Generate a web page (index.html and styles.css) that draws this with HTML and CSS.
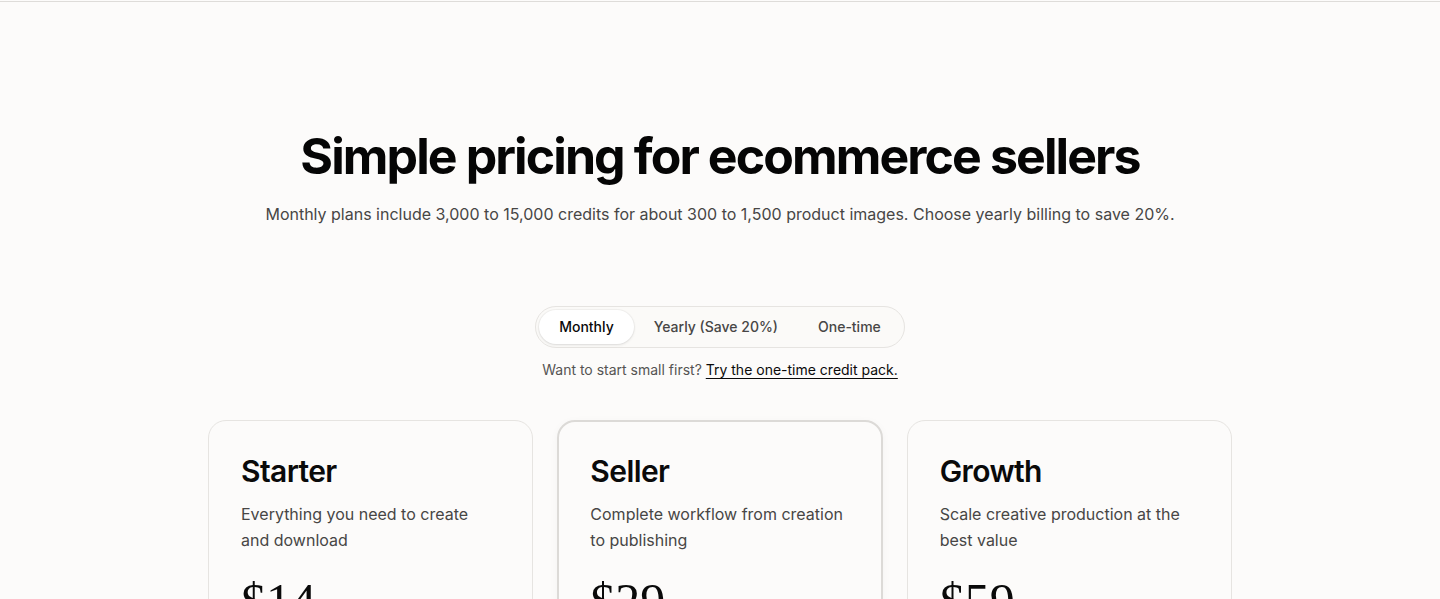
FILE: index.html
```html
<!DOCTYPE html>
<html lang="en">
<head>
  <meta charset="UTF-8">
  <title>Pricing</title>
  <link rel="stylesheet" href="styles.css">
</head>
<body>

  <div class="top-bar"></div>

  <main class="pricing">
    <section class="hero">
      <h1>Simple pricing for ecommerce sellers</h1>
      <p class="lead">Monthly plans include 3,000 to 15,000 credits for about 300 to 1,500 product images. Choose yearly billing to save 20%.</p>
    </section>

    <div class="billing">
      <div class="toggle">
        <button class="toggle-btn active">Monthly</button>
        <button class="toggle-btn">Yearly (Save 20%)</button>
        <button class="toggle-btn">One-time</button>
      </div>
      <p class="note">Want to start small first? <a href="#">Try the one-time credit pack.</a></p>
    </div>

    <div class="plans">
      <div class="plan">
        <h3>Starter</h3>
        <p class="plan-desc">Everything you need to create and download</p>
        <div class="price">$14</div>
      </div>
      <div class="plan featured">
        <h3>Seller</h3>
        <p class="plan-desc">Complete workflow from creation to publishing</p>
        <div class="price">$29</div>
      </div>
      <div class="plan">
        <h3>Growth</h3>
        <p class="plan-desc">Scale creative production at the best value</p>
        <div class="price">$59</div>
      </div>
    </div>
  </main>

</body>
</html>
```

FILE: styles.css
```css
body {
  margin: 0;
  font-family: Inter, 'Noto Sans', sans-serif;
  background: #fcfbfa;
  color: #0a0a0a;
}

.top-bar {
  height: 1px;
  border-bottom: 1px solid #dedcd9;
}

.pricing {
  max-width: 1024px;
  margin: 0 auto;
  padding-top: 126px;
}

.hero {
  text-align: center;
}

h1 {
  margin: 0;
  font-size: 50px;
  line-height: 56px;
  font-weight: 700;
  letter-spacing: -0.038em;
  color: #050505;
}

.lead {
  margin: 18px -100px 0;
  font-size: 16px;
  line-height: 24px;
  color: #474645;
  white-space: nowrap;
}

.billing {
  margin-top: 80px;
  display: flex;
  flex-direction: column;
  align-items: center;
}

.toggle {
  display: flex;
  padding: 3px;
  border: 1px solid #e6e4e1;
  border-radius: 999px;
  background: #fbfaf8;
}

.toggle-btn {
  font-family: inherit;
  font-size: 14px;
  font-weight: 500;
  line-height: 20px;
  padding: 7px 20px;
  border: none;
  border-radius: 999px;
  background: none;
  color: #474645;
  cursor: pointer;
}

.toggle-btn.active {
  background: #ffffff;
  color: #0a0a0a;
  box-shadow: 0 1px 3px rgba(0, 0, 0, 0.1), 0 0 0 1px rgba(0, 0, 0, 0.03);
}

.note {
  margin: 12px 0 0;
  font-size: 14px;
  line-height: 20px;
  color: #555453;
}

.note a {
  color: #0a0a0a;
  text-decoration: underline;
  text-underline-offset: 3px;
}

.plans {
  margin-top: 40px;
  display: grid;
  grid-template-columns: repeat(3, 1fr);
  gap: 24px;
}

.plan {
  border: 1px solid #e6e4e1;
  border-radius: 18px;
  background: #fcfbfa;
  padding: 32px 32px 40px;
  min-height: 300px;
}

.plan.featured {
  border: 2px solid #dcdad7;
  padding: 31px 31px 39px;
  box-shadow: 0 2px 8px rgba(0, 0, 0, 0.04);
}

.plan h3 {
  margin: 0;
  font-size: 30px;
  line-height: 36px;
  font-weight: 600;
  letter-spacing: -0.02em;
}

.plan-desc {
  margin: 12px 0 0;
  font-size: 16px;
  line-height: 26px;
  color: #474645;
}

.price {
  margin-top: 24px;
  font-family: 'Liberation Serif', 'DejaVu Serif', serif;
  font-size: 50px;
  line-height: 48px;
  color: #0a0a0a;
}
```
